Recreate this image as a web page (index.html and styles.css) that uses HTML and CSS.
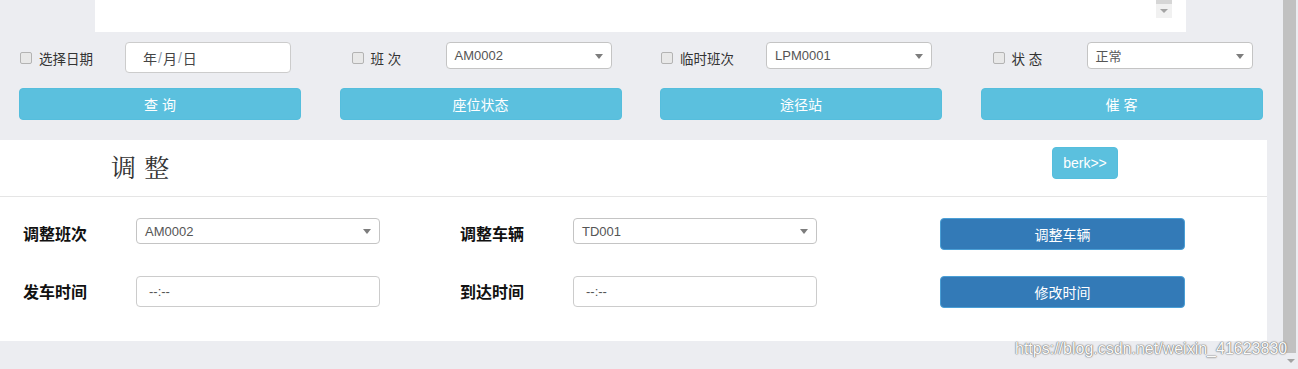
FILE: index.html
```html
<!DOCTYPE html>
<html lang="zh-CN">
<head>
    <meta charset="UTF-8">
    <title>调整</title>
    <link rel="stylesheet" href="styles.css">
</head>
<body>
    <div class="main">
        <!-- top box, scrolled to its end -->
        <div class="top-box">
            <div class="mini-scroll"><span class="mini-thumb"></span><span class="arrow-down"></span></div>
        </div>

        <!-- filters -->
        <div class="filter-row">
            <div class="filter">
                <label class="check"><input type="checkbox"> 选择日期</label>
                <div class="fake-input date">年 <span class="slash">/</span>月<span class="slash">/</span>日</div>
            </div>
            <div class="filter">
                <label class="check indent"><input type="checkbox"> 班 次</label>
                <div class="select short">AM0002</div>
            </div>
            <div class="filter">
                <label class="check"><input type="checkbox"> 临时班次</label>
                <div class="select short">LPM0001</div>
            </div>
            <div class="filter">
                <label class="check indent"><input type="checkbox"> 状 态</label>
                <div class="select short">正常</div>
            </div>
        </div>

        <div class="button-row">
            <button class="btn btn-info">查 询</button>
            <button class="btn btn-info">座位状态</button>
            <button class="btn btn-info">途径站</button>
            <button class="btn btn-info">催 客</button>
        </div>

        <!-- adjust panel -->
        <div class="panel">
            <div class="panel-head">
                <h2>调 整</h2>
                <button class="btn btn-info btn-small">berk&gt;&gt;</button>
            </div>
            <div class="panel-body">
                <div class="form-row">
                    <div class="field">
                        <span class="field-label">调整班次</span>
                        <div class="select wide">AM0002</div>
                    </div>
                    <div class="field">
                        <span class="field-label">调整车辆</span>
                        <div class="select wide">TD001</div>
                    </div>
                    <div class="field action">
                        <button class="btn btn-primary">调整车辆</button>
                    </div>
                </div>
                <div class="form-row">
                    <div class="field">
                        <span class="field-label">发车时间</span>
                        <div class="fake-input time">--:--</div>
                    </div>
                    <div class="field">
                        <span class="field-label">到达时间</span>
                        <div class="fake-input time">--:--</div>
                    </div>
                    <div class="field action">
                        <button class="btn btn-primary">修改时间</button>
                    </div>
                </div>
            </div>
        </div>
    </div>

    <div class="scrollbar">
        <div class="thumb"></div>
        <span class="arrow-down"></span>
    </div>

    <div class="watermark">https://blog.csdn.net/weixin_41623830</div>
</body>
</html>
```

FILE: styles.css
```css
body {
    margin: 0;
    display: flex;
    background-color: #ecedf1;
    font-family: "Liberation Sans", "Noto Sans CJK SC", sans-serif;
    color: #333;
    height: 369px;
    overflow: hidden;
}

.main {
    width: 1283px;
}

.top-box {
    margin-left: 95px;
    width: 1091px;
    height: 32px;
    background-color: #fff;
    display: flex;
    justify-content: flex-end;
}

.mini-scroll {
    width: 16px;
    height: 18px;
    margin-right: 14px;
    background-color: #f1f1f1;
    display: flex;
    flex-direction: column;
    align-items: center;
}

.mini-thumb {
    width: 16px;
    height: 4px;
    background-color: #d6d6d6;
    margin-bottom: 5px;
}

.arrow-down {
    width: 0;
    height: 0;
    border-left: 4px solid transparent;
    border-right: 4px solid transparent;
    border-top: 4px solid #a3a3a3;
}

/* filters */
.filter-row {
    display: grid;
    grid-template-columns: repeat(4, 320.5px);
    padding: 10px 0 0 20px;
}

.filter {
    display: flex;
    align-items: flex-start;
}

.check {
    width: 105px;
    height: 31px;
    display: flex;
    align-items: center;
    font-size: 13.5px;
    color: #333;
}

.check.indent {
    width: 94px;
    padding-left: 11px;
}

.check input {
    appearance: none;
    width: 12px;
    height: 12px;
    margin: 0 7px 0 0;
    border: 1px solid #b3b3b3;
    border-radius: 2px;
    background-color: #e8e8e8;
}

.fake-input,
.select {
    box-sizing: border-box;
    background-color: #fff;
    border: 1px solid #ccc;
    border-radius: 4px;
    font-size: 13px;
    color: #555;
    display: flex;
    align-items: center;
}

.fake-input.date {
    width: 166px;
    height: 31px;
    padding-left: 17px;
    font-size: 14px;
    color: #444;
}

.slash {
    color: #8a97a8;
    margin: 0 1px;
}

.select {
    position: relative;
    padding-left: 8px;
    border-color: #c4c4c4;
}

.select::after {
    content: "";
    position: absolute;
    right: 8px;
    top: 50%;
    margin-top: -2px;
    border-left: 4px solid transparent;
    border-right: 4px solid transparent;
    border-top: 5px solid #7d7d7d;
}

.select.short {
    width: 166px;
    height: 27px;
}

.select.wide {
    width: 244px;
    height: 26px;
}

.button-row {
    display: grid;
    grid-template-columns: repeat(4, 282px);
    column-gap: 38.5px;
    padding: 15px 0 20px 19px;
}

.btn {
    font-family: "Liberation Sans", "Noto Sans CJK SC", sans-serif;
    font-size: 14px;
    color: #fff;
    border-radius: 4px;
    height: 32px;
    cursor: pointer;
}

.btn-info {
    background-color: #5bc0de;
    border: 1px solid #55bedd;
}

.btn-primary {
    width: 245px;
    height: 32px;
    background-color: #337ab7;
    border: 1px solid #4a9fd6;
    font-size: 14px;
}

/* adjust panel */
.panel {
    width: 1267px;
    height: 201px;
    background-color: #fff;
}

.panel-head {
    height: 56px;
    border-bottom: 1px solid #e5e5e5;
    display: flex;
    align-items: flex-start;
    justify-content: space-between;
    padding: 0 149px 0 111px;
}

.panel-head h2 {
    margin: 8px 0 0;
    font-family: "Liberation Serif", "Noto Serif CJK SC", "Noto Sans CJK SC", serif;
    font-size: 25px;
    font-weight: normal;
    color: #333;
    letter-spacing: 1px;
}

.btn-small {
    margin-top: 7px;
    width: 66px;
    height: 32px;
    font-size: 14px;
}

.panel-body {
    padding: 21px 0 0 23px;
}

.form-row {
    display: grid;
    grid-template-columns: 437px 437px auto;
    margin-bottom: 27px;
}

.field {
    display: flex;
    align-items: center;
    height: 31px;
}

.field .select {
    align-self: flex-start;
}

.field-label {
    width: 113px;
    font-size: 16px;
    font-weight: bold;
    color: #111;
    margin-top: -2px;
}

.fake-input.time {
    width: 244px;
    height: 31px;
    padding-left: 12px;
}

.action {
    padding-left: 43px;
}

/* page scrollbar */
.scrollbar {
    width: 15px;
    height: 369px;
    background-color: #ecedf1;
    display: flex;
    flex-direction: column;
    align-items: center;
}

.thumb {
    width: 13px;
    height: 353px;
    background-color: #c1c1c1;
    align-self: flex-start;
    margin-bottom: 6px;
}

.watermark {
    position: absolute;
    left: 1015px;
    top: 340px;
    font-family: "Liberation Sans", sans-serif;
    font-size: 16px;
    color: #fafafa;
    text-shadow: 0 0 1px #6f6f6f, 0 0 1px #6f6f6f, 0 0 2px #9a9a9a;
}
```
